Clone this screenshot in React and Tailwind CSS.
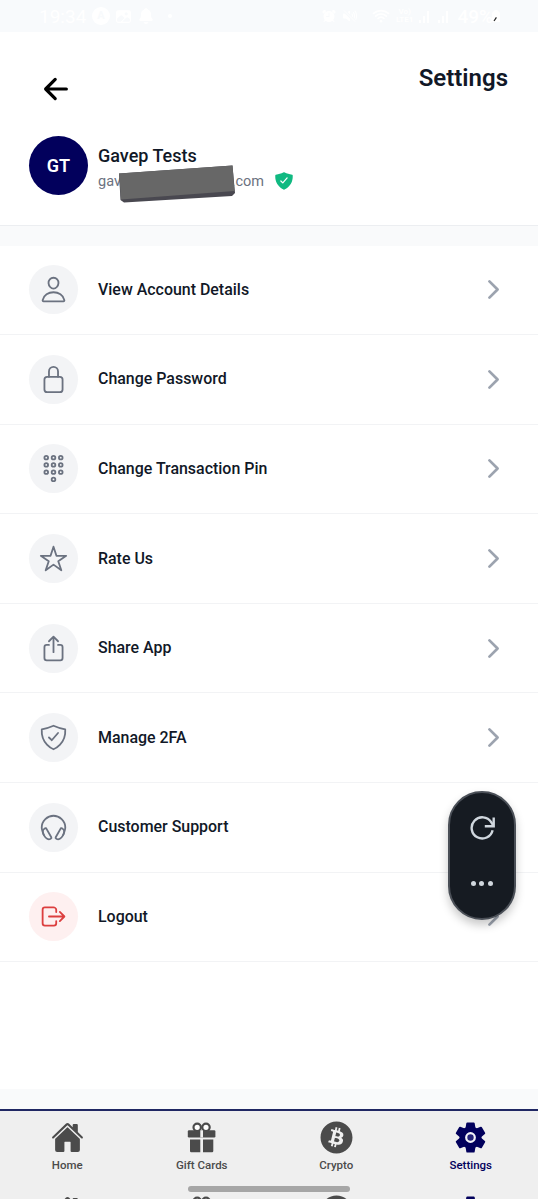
import {
  IoAlarm,
  IoArrowBack,
  IoChevronForward,
  IoHeadsetOutline,
  IoHome,
  IoImage,
  IoKeypadOutline,
  IoLockClosedOutline,
  IoLogOutOutline,
  IoNotifications,
  IoPersonOutline,
  IoShareOutline,
  IoShieldCheckmark,
  IoShieldCheckmarkOutline,
  IoStarOutline,
  IoVolumeMute,
  IoWifi,
} from 'react-icons/io5';
import { FaBitcoin } from 'react-icons/fa';

const GiftIcon = ({ className }) => (
  <svg className={className} viewBox="0 0 33 33">
    <circle cx="12.2" cy="6.3" r="3.7" fill="#fff" stroke="currentColor" strokeWidth="2.2" />
    <circle cx="21" cy="6.3" r="3.7" fill="#fff" stroke="currentColor" strokeWidth="2.2" />
    <rect x="2.8" y="9.3" width="27.6" height="7.2" rx="1.2" fill="currentColor" />
    <path d="M5 18.6h10.3v12.6H6.2a1.2 1.2 0 0 1-1.2-1.2zM18 18.6h10.3V30a1.2 1.2 0 0 1-1.2 1.2H18z" fill="currentColor" />
    <path d="M15.3 9.3h2.7v7.2h-2.7z" fill="#efefef" />
  </svg>
);

const GearIcon = ({ className }) => (
  <svg className={className} viewBox="0 0 33 33">
    <g fill="currentColor" stroke="currentColor" strokeWidth="2" strokeLinejoin="round">
      <circle cx="16.5" cy="16.5" r="10" />
      <path d="M13.3 2.5h6.4l1 6v16l-1 6h-6.4l-1-6v-16z" />
      <path d="M13.3 2.5h6.4l1 6v16l-1 6h-6.4l-1-6v-16z" transform="rotate(60 16.5 16.5)" />
      <path d="M13.3 2.5h6.4l1 6v16l-1 6h-6.4l-1-6v-16z" transform="rotate(120 16.5 16.5)" />
    </g>
    <circle cx="16.5" cy="16.5" r="4.3" fill="#24227a" stroke="#f4f4f8" strokeWidth="2.2" />
  </svg>
);

const menuItems = [
  { label: 'View Account Details', icon: IoPersonOutline },
  { label: 'Change Password', icon: IoLockClosedOutline },
  { label: 'Change Transaction Pin', icon: IoKeypadOutline },
  { label: 'Rate Us', icon: IoStarOutline },
  { label: 'Share App', icon: IoShareOutline },
  { label: 'Manage 2FA', icon: IoShieldCheckmarkOutline },
  { label: 'Customer Support', icon: IoHeadsetOutline },
  { label: 'Logout', icon: IoLogOutOutline, danger: true },
];

const tabs = [
  { label: 'Home', icon: IoHome },
  { label: 'Gift Cards', icon: GiftIcon },
  { label: 'Crypto', icon: FaBitcoin },
  { label: 'Settings', icon: GearIcon, active: true },
];

const StatusBar = () => (
  <div className="h-8 shrink-0 bg-[#f8fafc] text-white flex items-center justify-between pl-[39px] pr-[38px]">
    <div className="flex items-center gap-[5px]">
      <span className="text-[19px] leading-none w-[48px]">19:34</span>
      <span className="w-[18px] h-[18px] rounded-full bg-white flex items-center justify-center text-[11px] font-bold text-[#f8fafc]">
        A
      </span>
      <IoImage className="w-[17px] h-[17px]" />
      <IoNotifications className="w-[18px] h-[18px]" />
      <span className="w-1 h-1 rounded-full bg-white ml-2" />
    </div>
    <div className="flex items-center gap-[5px]">
      <IoAlarm className="w-4 h-4" />
      <IoVolumeMute className="w-4 h-4 mr-2" />
      <IoWifi className="w-5 h-5" />
      <span className="text-[8px] leading-[8px] font-bold text-center">
        Vo)
        <br />
        LTE1
      </span>
      <svg className="w-[34px] h-4" viewBox="0 0 34 16" fill="currentColor">
        <path d="M1 12h2v3H1zM5 8h2v7H5zM9 3h2v12H9zM20 12h2v3h-2zM24 8h2v7h-2zM28 3h2v12h-2z" />
      </svg>
      <span className="text-[19px] leading-none font-medium">49%</span>
      <svg className="w-2 h-4 -ml-1.5" viewBox="0 0 8 16">
        <path d="M0 5l3-3h2l3 3v9H0z" fill="#fff" />
        <path d="M2 13l2.4-3.6" stroke="#222" strokeWidth="1.2" />
      </svg>
    </div>
  </div>
);

const MenuRow = ({ item }) => {
  const Icon = item.icon;
  return (
    <div className="h-[89.6px] flex items-center pl-[29px] pr-[30px] border-b border-[#f2f3f5]">
      <div
        className={`w-[49px] h-[49px] rounded-full flex items-center justify-center ${
          item.danger ? 'bg-[#fef0f0] text-[#dc3f3f]' : 'bg-[#f3f4f6] text-[#6b7280]'
        }`}
      >
        <Icon className="w-[29px] h-[29px]" />
      </div>
      <span className="ml-5 flex-1 text-[15.95px] font-medium text-[#111827]">{item.label}</span>
      <IoChevronForward className="w-[29px] h-[29px] text-[#9ca3af]" />
    </div>
  );
};

const QuickActions = () => (
  <div className="absolute left-[448px] top-[791px] w-[68px] h-[129px] rounded-full bg-[#161b22] border-2 border-[#4a4f57] shadow-[0_5px_10px_rgba(0,0,0,0.22)] text-[#d0d7de]">
    <svg className="absolute left-[20px] top-[22px] w-[26px] h-[26px]" viewBox="0 0 26 26" fill="none" stroke="currentColor" strokeWidth="2.4">
      <path d="M22.6 15.2A10.6 10.6 0 1 1 21.2 7.2L23.2 10.4" />
      <path d="M23.7 2.4v8.9h-8.9" />
    </svg>
    <div className="absolute left-[21px] top-[88px] flex gap-[3.3px]">
      <span className="w-[5px] h-[5px] rounded-full bg-[#d0d7de]" />
      <span className="w-[5px] h-[5px] rounded-full bg-[#d0d7de]" />
      <span className="w-[5px] h-[5px] rounded-full bg-[#d0d7de]" />
    </div>
  </div>
);

const App = () => {
  return (
    <div className="relative w-[538px] h-[1199px] overflow-hidden flex flex-col bg-white font-['Roboto',sans-serif]">
      <StatusBar />

      {/* Header */}
      <div className="h-[194px] shrink-0 border-b border-[#eceef1]">
        <div className="flex items-start justify-between pl-[39px] pr-[30px] pt-[31px]">
          <IoArrowBack className="w-[34px] h-[34px] mt-[9px] text-black" />
          <h1 className="text-[24px] leading-[30px] font-semibold text-[#111827]">Settings</h1>
        </div>

        {/* Profile */}
        <div className="flex items-center pl-[29px] mt-[30px]">
          <div className="w-[59px] h-[59px] rounded-full bg-[#02005c] text-white text-[18px] font-semibold flex items-center justify-center">
            GT
          </div>
          <div className="ml-[10px] mt-[6px]">
            <p className="text-[18px] leading-6 font-medium text-[#111827]">Gavep Tests</p>
            <div className="relative flex items-center w-[196px] text-[14.5px] leading-6 text-[#6b7280] mt-[2px]">
              <span>gav</span>
              <span className="ml-auto mr-[30px]">.com</span>
              <IoShieldCheckmark className="absolute right-0 top-px w-[20px] h-[20px] text-[#10b981]" />
              <svg className="absolute left-[20px] -top-[7px] w-[118px] h-[40px]" viewBox="0 0 118 40">
                <path d="M1 10.5L114.5 2.5L117 30L114 33L6 39.5L2.5 37Z" fill="#494850" />
                <path d="M1 10.5L114.5 2.5L116.5 28L3 36.5Z" fill="#676767" />
              </svg>
            </div>
          </div>
        </div>
      </div>
      <div className="h-5 shrink-0 bg-[#f9fafb]" />

      {/* Menu */}
      <div className="flex-1 mt-[-0.5px]">
        {menuItems.map((item) => (
          <MenuRow key={item.label} item={item} />
        ))}
      </div>
      <div className="h-5 shrink-0 bg-[#f9fafb]" />

      {/* Bottom tabs */}
      <div className="relative h-[90px] shrink-0 overflow-hidden border-t-2 border-[#202763] bg-[#efefef] pt-[9.5px]">
        <div className="flex">
          {tabs.map(({ label, icon: Icon, active }) => (
            <div
              key={label}
              className={`flex-1 flex flex-col items-center ${active ? 'text-[#02005c]' : 'text-[#4b4b4b]'}`}
            >
              <Icon className="w-[33px] h-[33px]" />
              <span className="mt-[3.5px] text-[11.5px] leading-4 font-medium">{label}</span>
            </div>
          ))}
        </div>

        {/* Next row of icons, peeking in under the tabs */}
        <div className="flex mt-[22px]">
          {tabs.map(({ label, icon: Icon, active }) => (
            <div key={label} className={`flex-1 flex justify-center ${active ? 'text-[#02005c]' : 'text-[#4b4b4b]'}`}>
              <Icon className="w-[33px] h-[33px]" />
            </div>
          ))}
        </div>
        <div className="absolute left-[188px] top-[75px] w-[162px] h-[6px] rounded-full bg-[#a6a6a6]" />
      </div>

      <QuickActions />
    </div>
  );
};

export default App;
